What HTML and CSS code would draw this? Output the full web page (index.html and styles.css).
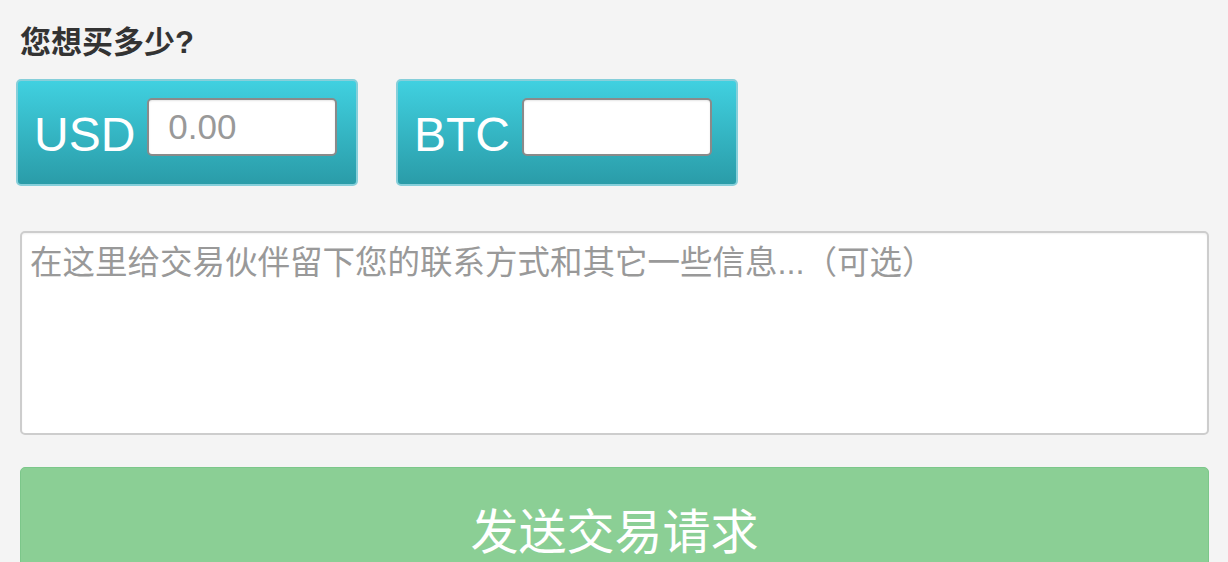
FILE: index.html
```html
<!DOCTYPE html>
<html lang="zh-CN">
<head>
    <meta charset="UTF-8">
    <meta name="viewport" content="width=device-width, initial-scale=1.0">
    <title>发送交易请求</title>
    <link rel="stylesheet" href="styles.css">
</head>
<body>
    <div class="pagina">
        <h4 class="pregunta">您想买多少?</h4>

        <div class="monedas">
            <div class="moneda">
                <span class="moneda-nombre">USD</span>
                <input class="moneda-campo" type="text" placeholder="0.00">
            </div>
            <div class="moneda">
                <span class="moneda-nombre">BTC</span>
                <input class="moneda-campo" type="text">
            </div>
        </div>

        <textarea class="mensaje" placeholder="在这里给交易伙伴留下您的联系方式和其它一些信息...（可选）"></textarea>

        <button class="enviar" type="button">发送交易请求</button>
    </div>
</body>
</html>
```

FILE: styles.css
```css
body {
    margin: 0;
    background-color: #f4f4f4;
    font-family: "Liberation Sans", "Noto Sans CJK SC", sans-serif;
    overflow: hidden;
}

.pagina {
    padding: 0 19px 0 20px;
}

.pregunta {
    margin: 25px 0 0;
    font-size: 31px;
    line-height: 36px;
    font-weight: bold;
    color: #333;
}

/* cajas de moneda */
.monedas {
    display: flex;
    gap: 38px;
    margin: 18px 0 0 -4px;
}

.moneda {
    display: flex;
    align-items: flex-start;
    gap: 12px;
    box-sizing: border-box;
    width: 342px;
    height: 107px;
    padding: 17px 0 0 16px;
    border: 2px solid #86cfda;
    border-radius: 5px;
    background: linear-gradient(to bottom, #40d0e0, #2a9ca8);
}

.moneda-nombre {
    margin-top: 9px;
    font-size: 48px;
    line-height: 56px;
    color: #fff;
}

.moneda-campo {
    box-sizing: border-box;
    width: 190px;
    height: 58px;
    margin: 0;
    padding: 0 19px;
    border: 2px solid #8a8a8a;
    border-radius: 5px;
    background: #fff;
    box-shadow: inset 0 1px 2px rgba(0, 0, 0, 0.1);
    font-family: "Liberation Sans", sans-serif;
    font-size: 35px;
    color: #333;
    outline: none;
}

.moneda-campo::placeholder {
    color: #999;
}

.mensaje {
    display: block;
    box-sizing: border-box;
    width: 100%;
    height: 204px;
    margin: 45px 0 0;
    padding: 8px 8px;
    border: 2px solid #cdcdcd;
    border-radius: 5px;
    background: #fff;
    box-shadow: inset 0 1px 2px rgba(0, 0, 0, 0.06);
    font-family: "Liberation Sans", "Noto Sans CJK SC", sans-serif;
    font-size: 32.5px;
    line-height: 1.4;
    resize: none;
    outline: none;
}

.mensaje::placeholder {
    color: #999;
}

.enviar {
    display: flex;
    justify-content: center;
    align-items: flex-start;
    box-sizing: border-box;
    width: 100%;
    height: 140px;
    margin-top: 32px;
    padding: 31px 0 0;
    border: 1px solid #7cc78a;
    border-radius: 5px;
    background-color: #8bcf95;
    font-family: "Liberation Sans", "Noto Sans CJK SC", sans-serif;
    font-size: 48px;
    line-height: 68px;
    color: #fff;
}
```
